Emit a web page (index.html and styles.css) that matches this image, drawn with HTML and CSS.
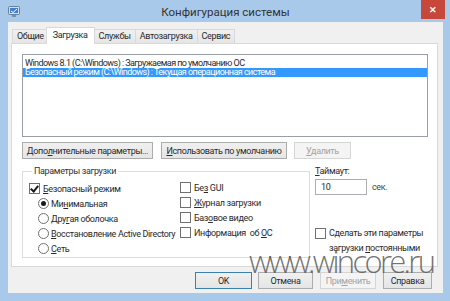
FILE: index.html
```html
<!DOCTYPE html>
<html lang="ru">
<head>
  <meta charset="UTF-8" />
  <title>Конфигурация системы</title>
  <link rel="stylesheet" href="styles.css">
</head>
<body>
  <div class="window">

    <!-- Title bar -->
    <div class="titlebar">
      <svg class="app-icon" width="12" height="11" viewBox="0 0 12 11">
        <rect x="0.5" y="0.5" width="11" height="8" rx="1" fill="#d7dde6" stroke="#6d7f99" />
        <rect x="2" y="2" width="8" height="5" fill="#3f7fd6" />
        <path d="M3 5 L5 6.5 L9 3" stroke="#fff" stroke-width="1" fill="none" />
        <rect x="4" y="9" width="4" height="2" fill="#7d8da3" />
      </svg>
      <div class="title">Конфигурация системы</div>
      <div class="close">&#x2715;</div>
    </div>

    <div class="client">
      <!-- Tabs -->
      <div class="tabs">
        <div class="tab">Общие</div>
        <div class="tab active">Загрузка</div>
        <div class="tab">Службы</div>
        <div class="tab">Автозагрузка</div>
        <div class="tab">Сервис</div>
      </div>

      <div class="panel">
        <div class="listbox">
          <div class="row">Windows 8.1 (C:\Windows) : Загружаемая по умолчанию ОС</div>
          <div class="row selected">Безопасный режим (C:\Windows) : Текущая операционная система</div>
        </div>

        <div class="btnrow">
          <button class="btn btn-adv">Допо<u>л</u>нительные параметры...</button>
          <button class="btn btn-default"><u>И</u>спользовать по умолчанию</button>
          <button class="btn btn-del" disabled><u>У</u>далить</button>
        </div>

        <div class="lower">
          <fieldset class="group">
            <legend>Параметры загрузки</legend>
            <div class="cols">
              <div class="col col-left">
                <div class="opt"><span class="check checked"></span><span><u>Б</u>езопасный режим</span></div>
                <div class="opt sub"><span class="radio checked"></span><span>Ми<u>н</u>имальная</span></div>
                <div class="opt sub"><span class="radio"></span><span>Дру<u>г</u>ая оболочка</span></div>
                <div class="opt sub"><span class="radio"></span><span><u>В</u>осстановление Active Directory</span></div>
                <div class="opt sub"><span class="radio"></span><span><u>С</u>еть</span></div>
              </div>
              <div class="col col-right">
                <div class="opt"><span class="check"></span><span>Бе<u>з</u> GUI</span></div>
                <div class="opt"><span class="check"></span><span><u>Ж</u>урнал загрузки</span></div>
                <div class="opt"><span class="check"></span><span>Баз<u>о</u>вое видео</span></div>
                <div class="opt"><span class="check"></span><span>Информация&nbsp; об <u>О</u>С</span></div>
              </div>
            </div>
          </fieldset>

          <div class="side">
            <div class="label"><u>Т</u>аймаут:</div>
            <div class="timeout">
              <div class="input">10</div>
              <span class="unit">сек.</span>
            </div>
            <div class="permanent">
              <span class="check"></span>
              <div>Сделать эти параметры<br>загрузки <u>п</u>остоянными</div>
            </div>
          </div>
        </div>
      </div>

      <!-- Dialog buttons -->
      <div class="footer">
        <button class="btn dlg ok">OK</button>
        <button class="btn dlg cancel">Отмена</button>
        <button class="btn dlg apply" disabled>При<u>м</u>енить</button>
        <button class="btn dlg help">Справка</button>
      </div>
    </div>

    <div class="watermark">www.wincore.ru</div>
  </div>
</body>
</html>
```

FILE: styles.css
```css
body {
  margin: 0;
  font-family: Roboto, 'Noto Sans', sans-serif;
  font-size: 9px;
  letter-spacing: -0.35px;
  color: #2a2a2a;
}

.window {
  position: relative;
  width: 450px;
  height: 301px;
  background: #a9c9eb;
  box-sizing: border-box;
  padding: 0 7px 8px 8px;
  display: flex;
  flex-direction: column;
  overflow: hidden;
}

.titlebar {
  height: 22px;
  flex: none;
  display: flex;
  align-items: center;
  position: relative;
}

.app-icon {
  flex: none;
}

.title {
  flex: 1;
  text-align: center;
  font-size: 11.5px;
  letter-spacing: 0;
  color: #333;
  margin: 2px 16px 0 4px;
}

.close {
  position: absolute;
  right: -2px;
  top: 0;
  width: 24px;
  height: 19px;
  background: #c8473b;
  color: #fff;
  font-size: 9px;
  font-weight: bold;
  display: flex;
  align-items: center;
  justify-content: center;
}

.client {
  flex: 1;
  background: #f0f0f0;
  padding: 0 5px 0 3px;
  display: flex;
  flex-direction: column;
}

/* Tabs */
.tabs {
  height: 21px;
  flex: none;
  display: flex;
  align-items: flex-end;
  padding-left: 1px;
}

.tab {
  height: 13px;
  line-height: 13px;
  padding: 0 4px 0 4px;
  border: 1px solid #d9d9d9;
  border-bottom: none;
  margin-right: -1px;
  background: linear-gradient(#f0f0f0, #e5e5e5);
}

.tab.active {
  height: 16px;
  line-height: 15px;
  background: #fff;
  margin: 0 -2px -1px -2px;
  padding: 0 6px 0 6px;
  position: relative;
  z-index: 1;
}

.tab.active + .tab {
  margin-left: 1px;
}

.panel {
  height: 224px;
  flex: none;
  box-sizing: border-box;
  background: #fff;
  border: 1px solid #d9d9d9;
  padding: 10px 9px 0 10px;
}

.listbox {
  height: 77px;
  border: 1px solid #9a9ea6;
  padding-top: 4px;
}

.row {
  height: 9px;
  line-height: 9px;
  padding-left: 2px;
  letter-spacing: -0.55px;
  white-space: nowrap;
}

.row.selected {
  background: #3399ff;
  color: #fff;
}

/* Buttons */
.btn {
  font-family: inherit;
  font-size: 9px;
  letter-spacing: -0.35px;
  color: #2a2a2a;
  height: 17px;
  padding: 0;
  border: 1px solid #acacac;
  background: linear-gradient(#f0f0f0, #e5e5e5);
  white-space: nowrap;
}

.btn:disabled {
  color: #a3a3a3;
  border-color: #d5d5d5;
  background: #f4f4f4;
}

.btnrow {
  display: flex;
  margin-top: 5px;
}

.btn-adv { width: 131px; }
.btn-default { width: 126px; margin-left: 8px; }
.btn-del { width: 57px; margin-left: 7px; }

/* Lower area */
.lower {
  display: flex;
  margin-top: 7px;
}

.group {
  width: 288px;
  height: 92px;
  box-sizing: border-box;
  margin: 0;
  padding: 5px 0 0 6px;
  border: 1px solid #dcdcdc;
}

.group legend {
  padding: 0 2px;
  margin-left: 3px;
  color: #333;
}

.cols {
  display: flex;
}

.col-left {
  width: 151px;
}

.col-right {
  margin-top: -1px;
}

.opt {
  height: 15px;
  display: flex;
  align-items: center;
  white-space: nowrap;
}

.opt.sub {
  padding-left: 9px;
}

.check {
  width: 9px;
  height: 9px;
  border: 1px solid #707070;
  background: #fff;
  margin-right: 3px;
  position: relative;
  flex: none;
}

.check.checked::after {
  content: '';
  position: absolute;
  left: 2px;
  top: 0;
  width: 3px;
  height: 6px;
  border: solid #1a1a1a;
  border-width: 0 2px 2px 0;
  transform: rotate(40deg);
}

.radio {
  width: 9px;
  height: 9px;
  border: 1px solid #707070;
  border-radius: 50%;
  background: #fff;
  margin-right: 2px;
  position: relative;
  flex: none;
}

.radio.checked::after {
  content: '';
  position: absolute;
  left: 2px;
  top: 2px;
  width: 5px;
  height: 5px;
  border-radius: 50%;
  background: #1a1a1a;
}

.side {
  flex: 1;
  margin-left: 5px;
}

.label {
  height: 10px;
  line-height: 10px;
}

.timeout {
  display: flex;
  align-items: center;
  margin-top: 3px;
}

.input {
  width: 52px;
  height: 16px;
  box-sizing: border-box;
  line-height: 14px;
  border: 1px solid #abadb3;
  padding-left: 5px;
  background: #fff;
}

.unit {
  margin-left: 5px;
  color: #444;
}

.permanent {
  display: flex;
  align-items: flex-start;
  margin-top: 31px;
  line-height: 15px;
  white-space: nowrap;
}

.permanent .check {
  margin-top: 2px;
}

/* Footer */
.footer {
  display: flex;
  justify-content: flex-end;
  padding-top: 5px;
  padding-right: 6px;
}

.dlg.ok {
  width: 57px;
  border-color: #3c7fb1;
}

.dlg.cancel {
  width: 55px;
  margin-left: 6px;
}

.dlg.apply {
  width: 56px;
  margin-left: 7px;
}

.dlg.help {
  width: 49px;
  margin-left: 7px;
}

.watermark {
  position: absolute;
  left: 249px;
  top: 240px;
  font-family: 'Open Sans', sans-serif;
  font-weight: 300;
  font-size: 31px;
  letter-spacing: -2.7px;
  color: rgba(90, 90, 90, 0.85);
  pointer-events: none;
}
```
